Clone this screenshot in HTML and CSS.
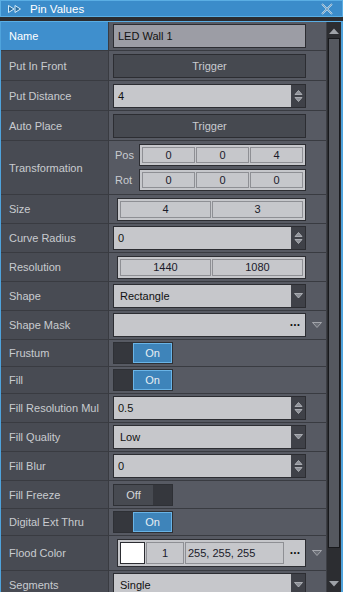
FILE: index.html
```html
<!DOCTYPE html>
<html lang="en">
<head>
    <meta charset="UTF-8">
    <meta name="viewport" content="width=device-width, initial-scale=1.0">
    <title>Pin Values</title>
    <link rel="stylesheet" href="styles.css">
</head>
<body>
    <div class="window">
        <!-- 标题栏 -->
        <div class="titlebar">
            <svg class="title-icon" width="14" height="8" viewBox="0 0 14 8">
                <path d="M0.5 0.5 L6 4 L0.5 7.5 Z M7 0.5 L12.5 4 L7 7.5 Z" fill="#2c6e9f" stroke="#d6ecfa" stroke-width="1"/>
            </svg>
            <span class="title-text">Pin Values</span>
            <svg class="close" width="12" height="12" viewBox="0 0 12 12">
                <path d="M1 1 L11 11 M11 1 L1 11" stroke="#e8f4fc" stroke-width="1.6"/>
                <path d="M1 1 L11 11 M11 1 L1 11" stroke="#3a6f96" stroke-width="0.6"/>
            </svg>
        </div>
        <div class="gap"></div>

        <!-- 属性面板 -->
        <div class="panel">
            <div class="props">
                <div class="row">
                    <div class="label selected">Name</div>
                    <div class="value"><div class="input name-input">LED Wall 1</div></div>
                </div>
                <div class="row r30">
                    <div class="label">Put In Front</div>
                    <div class="value"><div class="btn">Trigger</div></div>
                </div>
                <div class="row r30">
                    <div class="label">Put Distance</div>
                    <div class="value">
                        <div class="input">
                            <span class="text">4</span>
                            <span class="spin"><svg width="9" height="14" viewBox="0 0 9 14"><path d="M1 5.5 L4.5 1.5 L8 5.5 Z M1 8.5 L4.5 12.5 L8 8.5 Z" fill="#8d9097" stroke="#b9bbc0" stroke-width="0.8"/></svg></span>
                        </div>
                    </div>
                </div>
                <div class="row r30">
                    <div class="label">Auto Place</div>
                    <div class="value"><div class="btn">Trigger</div></div>
                </div>
                <div class="row transform">
                    <div class="label">Transformation</div>
                    <div class="value column">
                        <div class="vec-line">
                            <span class="sub">Pos</span>
                            <div class="frame three"><span>0</span><span>0</span><span>4</span></div>
                        </div>
                        <div class="vec-line">
                            <span class="sub">Rot</span>
                            <div class="frame three"><span>0</span><span>0</span><span>0</span></div>
                        </div>
                    </div>
                </div>
                <div class="row">
                    <div class="label">Size</div>
                    <div class="value pad8"><div class="frame two"><span>4</span><span>3</span></div></div>
                </div>
                <div class="row">
                    <div class="label">Curve Radius</div>
                    <div class="value">
                        <div class="input">
                            <span class="text">0</span>
                            <span class="spin"><svg width="9" height="14" viewBox="0 0 9 14"><path d="M1 5.5 L4.5 1.5 L8 5.5 Z M1 8.5 L4.5 12.5 L8 8.5 Z" fill="#8d9097" stroke="#b9bbc0" stroke-width="0.8"/></svg></span>
                        </div>
                    </div>
                </div>
                <div class="row">
                    <div class="label">Resolution</div>
                    <div class="value pad8"><div class="frame two"><span>1440</span><span>1080</span></div></div>
                </div>
                <div class="row">
                    <div class="label">Shape</div>
                    <div class="value">
                        <div class="input">
                            <span class="text indent">Rectangle</span>
                            <span class="spin"><svg width="9" height="6" viewBox="0 0 9 6"><path d="M0.5 0.5 L8.5 0.5 L4.5 5 Z" fill="#8d9097" stroke="#b9bbc0" stroke-width="0.8"/></svg></span>
                        </div>
                    </div>
                </div>
                <div class="row">
                    <div class="label">Shape Mask</div>
                    <div class="value">
                        <div class="input">
                            <span class="text"></span>
                            <span class="dots">&middot;&middot;&middot;</span>
                        </div>
                        <svg class="outer-drop" width="10" height="6" viewBox="0 0 10 6"><path d="M0.5 0.5 L9.5 0.5 L5 5.5 Z" fill="#6c6f77" stroke="#b4b6bb" stroke-width="0.8"/></svg>
                    </div>
                </div>
                <div class="row switch-row">
                    <div class="label">Frustum</div>
                    <div class="value"><div class="switch"><span class="knob"></span><span class="state on">On</span></div></div>
                </div>
                <div class="row switch-row">
                    <div class="label">Fill</div>
                    <div class="value"><div class="switch"><span class="knob"></span><span class="state on">On</span></div></div>
                </div>
                <div class="row">
                    <div class="label">Fill Resolution Mul</div>
                    <div class="value">
                        <div class="input">
                            <span class="text">0.5</span>
                            <span class="spin"><svg width="9" height="14" viewBox="0 0 9 14"><path d="M1 5.5 L4.5 1.5 L8 5.5 Z M1 8.5 L4.5 12.5 L8 8.5 Z" fill="#8d9097" stroke="#b9bbc0" stroke-width="0.8"/></svg></span>
                        </div>
                    </div>
                </div>
                <div class="row">
                    <div class="label">Fill Quality</div>
                    <div class="value">
                        <div class="input">
                            <span class="text indent">Low</span>
                            <span class="spin"><svg width="9" height="6" viewBox="0 0 9 6"><path d="M0.5 0.5 L8.5 0.5 L4.5 5 Z" fill="#8d9097" stroke="#b9bbc0" stroke-width="0.8"/></svg></span>
                        </div>
                    </div>
                </div>
                <div class="row">
                    <div class="label">Fill Blur</div>
                    <div class="value">
                        <div class="input">
                            <span class="text">0</span>
                            <span class="spin"><svg width="9" height="14" viewBox="0 0 9 14"><path d="M1 5.5 L4.5 1.5 L8 5.5 Z M1 8.5 L4.5 12.5 L8 8.5 Z" fill="#8d9097" stroke="#b9bbc0" stroke-width="0.8"/></svg></span>
                        </div>
                    </div>
                </div>
                <div class="row r28">
                    <div class="label">Fill Freeze</div>
                    <div class="value"><div class="switch"><span class="state off">Off</span><span class="knob"></span></div></div>
                </div>
                <div class="row switch-row">
                    <div class="label">Digital Ext Thru</div>
                    <div class="value"><div class="switch"><span class="knob"></span><span class="state on">On</span></div></div>
                </div>
                <div class="row flood">
                    <div class="label">Flood Color</div>
                    <div class="value pad8">
                        <div class="frame color">
                            <span class="swatch"></span>
                            <span class="alpha">1</span>
                            <span class="rgb">255, 255, 255</span>
                            <span class="dots">&middot;&middot;&middot;</span>
                        </div>
                        <svg class="outer-drop" width="10" height="6" viewBox="0 0 10 6"><path d="M0.5 0.5 L9.5 0.5 L5 5.5 Z" fill="#6c6f77" stroke="#b4b6bb" stroke-width="0.8"/></svg>
                    </div>
                </div>
                <div class="row">
                    <div class="label">Segments</div>
                    <div class="value">
                        <div class="input">
                            <span class="text indent">Single</span>
                            <span class="spin"><svg width="9" height="6" viewBox="0 0 9 6"><path d="M0.5 0.5 L8.5 0.5 L4.5 5 Z" fill="#8d9097" stroke="#b9bbc0" stroke-width="0.8"/></svg></span>
                        </div>
                    </div>
                </div>
            </div>

            <!-- 滚动条 -->
            <div class="scrollbar">
                <svg class="arrow" width="10" height="6" viewBox="0 0 10 6"><path d="M0 6 L5 0.5 L10 6 Z" fill="#9fa2a8"/></svg>
                <div class="thumb"></div>
                <svg class="arrow" width="10" height="6" viewBox="0 0 10 6"><path d="M0 0 L10 0 L5 5.5 Z" fill="#9fa2a8"/></svg>
            </div>
        </div>
    </div>
</body>
</html>
```

FILE: styles.css
```css
/* 全局样式 */
* {
    margin: 0;
    padding: 0;
    box-sizing: border-box;
}

body {
    font-family: "Liberation Sans", Arial, sans-serif;
    font-size: 11px;
    background-color: #2b2c30;
    width: 343px;
    height: 592px;
    overflow: hidden;
}

.window {
    height: 592px;
    display: flex;
    flex-direction: column;
}

/* 标题栏 */
.titlebar {
    height: 17px;
    background-color: #3b8cca;
    border: 1px solid #5aaee4;
    display: flex;
    align-items: center;
    padding-left: 7px;
    color: #ffffff;
}

.title-icon {
    margin-right: 8px;
}

.title-text {
    flex: 1;
    font-size: 11.5px;
}

.close {
    margin-right: 9px;
}

.gap {
    height: 4px;
    background-color: #2b2c30;
}

/* 属性面板 */
.panel {
    flex: 1;
    display: flex;
    border-top: 1px solid #5aaee4;
    border-left: 1px solid #4fa3dc;
    border-right: 2px solid #4fa3dc;
    overflow: hidden;
    min-height: 0;
}

.props {
    flex: 1;
    display: flex;
    flex-direction: column;
}

.row {
    display: flex;
    height: 29px;
    flex-shrink: 0;
    border-bottom: 1px solid #393b41;
}

.row.r30 {
    height: 30px;
}

.row.r28 {
    height: 28px;
}

.row.switch-row {
    height: 27px;
}

.row.transform {
    height: 54px;
}

.row.flood {
    height: 35px;
}

.label {
    width: 108px;
    flex-shrink: 0;
    background-color: #484b53;
    border-right: 1px solid #393b41;
    color: #c9cbd0;
    padding-left: 8px;
    display: flex;
    align-items: center;
    white-space: nowrap;
}

.label.selected {
    background-color: #3f8fcd;
    color: #ffffff;
}

.value {
    flex: 1;
    background-color: #575a63;
    display: flex;
    align-items: center;
    padding: 0 4px;
}

.value.pad8 {
    padding-left: 8px;
}

.value.column {
    flex-direction: column;
    justify-content: center;
    align-items: stretch;
    gap: 3px;
    padding-right: 20px;
}

/* 输入框 */
.input {
    width: 193px;
    height: 24px;
    background-color: #c6c7cb;
    border: 1px solid #2c2d32;
    color: #111111;
    display: flex;
    align-items: stretch;
    flex-shrink: 0;
}

.input .text {
    flex: 1;
    display: flex;
    align-items: center;
    padding-left: 4px;
}

.input .text.indent {
    padding-left: 6px;
}

.name-input {
    background-color: #9c9da5;
    align-items: center;
    padding-left: 4px;
}

.spin {
    width: 14px;
    background-color: #3f4148;
    display: flex;
    align-items: center;
    justify-content: center;
}

.dots {
    width: 20px;
    display: flex;
    align-items: center;
    justify-content: center;
    font-weight: bold;
    font-size: 12px;
    letter-spacing: -0.5px;
    color: #111111;
}

.outer-drop {
    margin-left: 6px;
}

/* 按钮 */
.btn {
    width: 193px;
    height: 24px;
    background-color: #464950;
    border: 1px solid #2c2d32;
    color: #c9cbd0;
    display: flex;
    align-items: center;
    justify-content: center;
}

/* 向量输入 */
.vec-line {
    display: flex;
    align-items: center;
}

.sub {
    width: 26px;
    padding-left: 2px;
    color: #c9cbd0;
}

.frame {
    height: 23px;
    flex: 1;
    max-width: 189px;
    background-color: #c6c7cb;
    border: 1px solid #2c2d32;
    display: flex;
    padding: 2px;
    gap: 1px;
    color: #1a1a2a;
}

.vec-line .frame {
    height: 22px;
}

.frame span {
    flex: 1;
    border: 1px solid #8e8f94;
    display: flex;
    align-items: center;
    justify-content: center;
}

.frame.color {
    height: 28px;
}

.frame.color span {
    flex: none;
}

.frame.color .swatch {
    width: 25px;
    background-color: #ffffff;
    border-color: #2c2d32;
}

.frame.color .alpha {
    width: 38px;
}

.frame.color .rgb {
    width: 99px;
    justify-content: flex-start;
    padding-left: 2px;
}

.frame.color .dots {
    border: none;
    width: 20px;
}

/* 开关 */
.switch {
    width: 60px;
    height: 22px;
    display: flex;
    border: 1px solid #2e3035;
    background-color: #35373d;
}

.knob {
    width: 19px;
    background-color: #35373d;
}

.state {
    flex: 1;
    display: flex;
    align-items: center;
    justify-content: center;
    color: #e8eef3;
}

.state.on {
    background-color: #3e84ba;
    outline: 1px solid #6ab4e6;
    outline-offset: -1px;
}

.state.off {
    background-color: #474a51;
    color: #d4d6da;
}

/* 滚动条 */
.scrollbar {
    width: 16px;
    background-color: #2c2d31;
    border-left: 1px solid #3d3f45;
    display: flex;
    flex-direction: column;
    align-items: center;
    padding: 6px 0 5px;
}

.thumb {
    width: 12px;
    flex: 1;
    margin: 4px 0 33px;
    background-color: #55585f;
    border: 1px solid #18191c;
}
```
